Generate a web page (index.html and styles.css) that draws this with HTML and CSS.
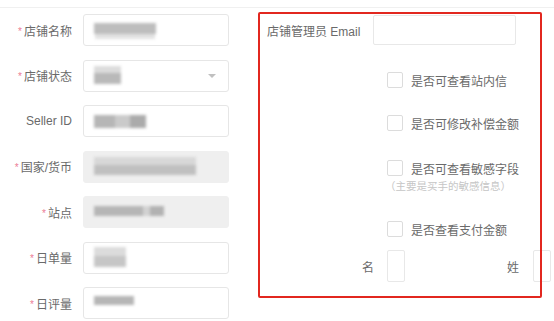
FILE: index.html
```html
<!DOCTYPE html>
<html lang="zh-CN">
<head>
<meta charset="utf-8">
<link rel="stylesheet" href="styles.css">
</head>
<body>
<div class="page">
  <div class="left">
    <div class="row"><label class="lbl"><span class="req">*</span>店铺名称</label><div class="inp"><span class="blur b1"></span></div></div>
    <div class="row"><label class="lbl"><span class="req">*</span>店铺状态</label><div class="inp"><span class="blur b2"></span><span class="arrow"></span></div></div>
    <div class="row"><label class="lbl">Seller ID</label><div class="inp"><span class="blur b3"></span></div></div>
    <div class="row"><label class="lbl"><span class="req">*</span>国家/货币</label><div class="inp dis"><span class="blur b4"></span></div></div>
    <div class="row"><label class="lbl"><span class="req">*</span>站点</label><div class="inp dis"><span class="blur b5"></span></div></div>
    <div class="row"><label class="lbl"><span class="req">*</span>日单量</label><div class="inp"><span class="blur b6"></span></div></div>
    <div class="row"><label class="lbl"><span class="req">*</span>日评量</label><div class="inp"><span class="blur b7"></span></div></div>
  </div>
  <div class="right">
    <div class="email-row"><label class="elbl">店铺管理员 Email</label><div class="einp"></div></div>
    <div class="chk c1"><span class="box"></span><span>是否可查看站内信</span></div>
    <div class="chk c2"><span class="box"></span><span>是否可修改补偿金额</span></div>
    <div class="chk c3"><span class="box"></span><span>是否可查看敏感字段</span></div>
    <div class="sub">（主要是买手的敏感信息）</div>
    <div class="chk c4"><span class="box"></span><span>是否查看支付金额</span></div>
    <div class="name-row">
      <label class="nlbl n1">名</label><div class="ninp"></div>
      <label class="nlbl n2">姓</label><div class="ninp"></div>
    </div>
  </div>
  <div class="mark"></div>
</div>
</body>
</html>
```

FILE: styles.css
```css
html, body {
  margin: 0;
  padding: 0;
  background: #fff;
  overflow: hidden;
}
body {
  width: 554px;
  height: 321px;
  font-family: "Liberation Sans", "Noto Sans CJK SC", sans-serif;
  font-size: 12px;
  color: #6a6a6a;
}
.page {
  position: relative;
  margin-top: 7px;
  border-top: 1px solid #f0f0f0;
  display: flex;
  height: 313px;
}
.left {
  width: 258px;
  padding-top: 6px;
  display: flex;
  flex-direction: column;
  gap: 13.5px;
}
.row {
  display: flex;
  align-items: center;
  height: 32px;
}
.lbl {
  width: 72px;
  padding-right: 11px;
  text-align: right;
  color: #6a6a6a;
  font-size: 12px;
}
.req {
  color: #ec7c96;
  font-size: 10px;
  margin-right: 2px;
  position: relative;
  top: -1px;
}
.inp {
  position: relative;
  width: 146px;
  height: 32px;
  box-sizing: border-box;
  border: 1px solid #e6e6e6;
  border-radius: 3px;
  background: #fff;
}
.inp.dis {
  background: #efefef;
  border-color: #efefef;
}
.blur {
  position: absolute;
  display: block;
  background: #bdbdbd;
  filter: blur(1.8px);
}
.b1 { left: 10px; top: 8px; width: 62px; height: 11px; box-shadow: 0 6px 0 -1px #e2e2e2; }
.b2 { left: 10px; top: 5px; width: 27px; height: 18px; background: linear-gradient(#dcdcdc 40%, #b9b9b9 40%); }
.b3 { left: 10px; top: 9px; width: 52px; height: 13px; background: linear-gradient(90deg, #b6b6b6 40%, #cacaca 40%, #cacaca 70%, #ababab 70%); }
.b4 { left: 10px; top: 5px; width: 102px; height: 18px; background: linear-gradient(#d8d8d8 45%, #c0c0c0 45%); }
.b5 { left: 10px; top: 9px; width: 70px; height: 10px; background: linear-gradient(90deg, #b6b6b6 70%, #d2d2d2 70%, #d2d2d2 80%, #b2b2b2 80%); }
.b6 { left: 10px; top: 4px; width: 32px; height: 20px; background: linear-gradient(#dcdcdc 45%, #c6c6c6 45%); }
.b7 { left: 10px; top: 8px; width: 40px; height: 9px; background: #b6b6b6; }
.arrow {
  position: absolute;
  right: 12px;
  top: 13px;
  width: 0;
  height: 0;
  border-left: 4px solid transparent;
  border-right: 4px solid transparent;
  border-top: 4px solid #c0c0c0;
}
.right {
  flex: 1;
  padding-top: 7px;
  padding-left: 9px;
  display: flex;
  flex-direction: column;
}
.email-row {
  display: flex;
  align-items: center;
  height: 30px;
}
.elbl {
  width: 106px;
}
.einp {
  width: 143px;
  height: 30px;
  box-sizing: border-box;
  border: 1px solid #e8e8e8;
  border-radius: 2px;
}
.chk {
  display: flex;
  align-items: center;
  height: 16px;
  margin-left: 120px;
  gap: 8px;
}
.box {
  width: 16px;
  height: 16px;
  box-sizing: border-box;
  border: 1px solid #dcdcdc;
  border-radius: 2px;
  background: #fff;
}
.c1 { margin-top: 27px; }
.c2 { margin-top: 27px; }
.c3 { margin-top: 29px; }
.c4 { margin-top: 29px; }
.sub {
  margin-top: 4px;
  margin-left: 118px;
  font-size: 10.5px;
  line-height: 12px;
  color: #c6c6c6;
}
.name-row {
  display: flex;
  align-items: center;
  margin-top: 13px;
  height: 32px;
}
.nlbl {
  text-align: right;
}
.n1 { width: 107px; padding-right: 13px; }
.n2 { width: 114px; padding-right: 14px; }
.ninp {
  width: 18px;
  height: 32px;
  box-sizing: border-box;
  border: 1px solid #e8e8e8;
  border-radius: 2px;
  background: #fff;
}
.mark {
  position: absolute;
  left: 258px;
  top: 4px;
  width: 284px;
  height: 286px;
  box-sizing: border-box;
  border: 2px solid #e2271f;
  border-radius: 2px;
}
```
